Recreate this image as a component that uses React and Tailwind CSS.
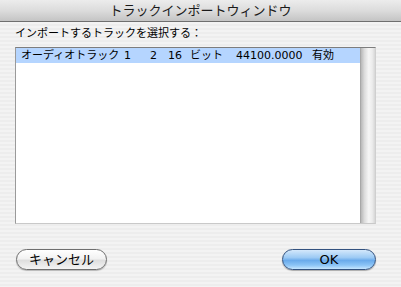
import React from "react";

const jp = { fontFamily: '"DejaVu Sans","Noto Sans CJK JP","Noto Sans",sans-serif' };

export default function App() {
  return (
    <div
      className="w-[401px] h-[287px] flex flex-col overflow-hidden text-black bg-[repeating-linear-gradient(180deg,#ededed_0px,#ededed_2px,#f3f3f3_2px,#f3f3f3_4px)]"
      style={jp}
    >
      <div className="h-[22px] shrink-0 flex items-center justify-center border-b border-[#6f6f6f] bg-[linear-gradient(180deg,#ececec_0%,#dcdcdc_50%,#c4c4c4_100%)]">
        <span className="text-[13px] leading-[14px] text-[#1a1a1a]">トラックインポートウィンドウ</span>
      </div>
      <div className="flex flex-col">
        <div className="pl-[15px] pt-[5px] text-[11px] leading-[14px]">インポートするトラックを選択する：</div>
        <div className="ml-[15px] mt-[6px] w-[361px] h-[177px] flex border-t border-t-[#7d7d7d] border-l border-l-[#9a9a9a] border-b border-b-[#c9c9c9] border-r border-r-[#cfcfcf]">
          <div className="flex-1 bg-white">
            <div className="h-[15px] bg-[#b5d5ff] flex items-center pl-[5px] text-[11px] leading-[15px] whitespace-nowrap">
              <span className="inline-block w-[103px] shrink-0">オーディオトラック</span>
              <span className="inline-block w-[26px] shrink-0">1</span>
              <span className="inline-block w-[18px] shrink-0">2</span>
              <span className="inline-block w-[22px] shrink-0">16</span>
              <span className="inline-block w-[46px] shrink-0">ビット</span>
              <span className="inline-block w-[76px] shrink-0">44100.0000</span>
              <span className="inline-block shrink-0">有効</span>
            </div>
          </div>
          <div className="w-[15px] bg-[linear-gradient(90deg,#b8b8b8_0%,#dcdcdc_25%,#f6f6f6_55%,#ececec_80%,#d6d6d6_100%)] border-l border-[#a8a8a8]" />
        </div>
        <div className="mt-[25px] flex justify-between pl-[16px] pr-[25px]">
          <button className="w-[91px] h-[21px] rounded-full border border-[#6e6e6e] bg-[linear-gradient(180deg,#ffffff_0%,#f2f2f2_45%,#dedede_55%,#f4f4f4_100%)] shadow-[0_1px_1px_rgba(0,0,0,0.25)] text-[13px] leading-[19px] text-black" style={jp}>
            キャンセル
          </button>
          <button className="w-[94px] h-[21px] rounded-full border border-[#33527f] bg-[linear-gradient(180deg,#d4e8fb_0%,#9ccaf4_40%,#6aaaeb_55%,#8cc4f6_80%,#c6e6ff_100%)] shadow-[0_1px_1px_rgba(0,0,0,0.3)] text-[13px] leading-[19px] text-black" style={jp}>
            OK
          </button>
        </div>
      </div>
    </div>
  );
}
